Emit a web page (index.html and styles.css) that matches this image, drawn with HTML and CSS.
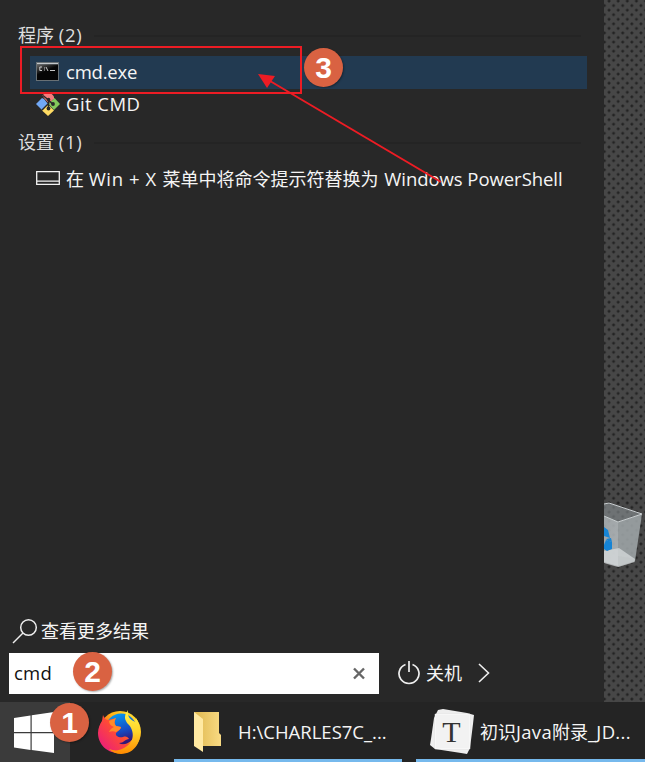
FILE: index.html
```html
<!DOCTYPE html>
<html lang="zh-CN">
<head>
<meta charset="utf-8">
<title>cmd</title>
<link rel="stylesheet" href="styles.css">
</head>
<body>
<div class="screen">
  <main class="desktop">
    <section class="menu">
      <div class="results">
        <h2 class="group"><span class="group-name">程序 <span class="latin count">(2)</span></span></h2>
        <div class="row selected">
          <svg class="icon" width="24" height="24" viewBox="0 0 24 24">
            <defs><linearGradient id="con" x2=".6" y2="1"><stop stop-color="#666"/><stop offset=".5" stop-color="#050505"/></linearGradient></defs>
            <path fill="#687075" d="M0 2h23v19H0z"/><path fill="#c3c7ca" d="M1 3h21v1H1z"/><path fill="url(#con)" d="M1 4.500h21V20H1z"/>
            <path fill="none" stroke="#ddd" stroke-width=".9" d="M6 7H3.800v3.500H6M8.500 7.500v1m0 1v1M10 7l2 4m2-.5h5"/>
          </svg>
          <span class="latin exe">cmd.exe</span>
        </div>
        <div class="row git-row">
          <svg class="icon" width="24" height="24" viewBox="0 0 24 24">
            <path fill="#f47c7c" d="M6.500 3.500 10 0h4l4 4.500v2l-4 4h-2L8 6z"/><path fill="#71a8f5" d="m6 6 2 1 4 5-6 6-6-6z"/>
            <path fill="#83c85b" d="m18.500 6 5.500 6-6 6-5.500-6z"/><path fill="#ffdb63" d="m12 12.500 6 6L12 24l-6-5.500z"/>
            <path stroke="#282828" stroke-width="1.400" fill="none" d="m7 3.500 5.500 4.500v8.500M12.500 8l4.500 4.500M6 18l6-6"/>
            <circle cx="12.500" cy="7.500" r="1.800" fill="#282828"/><circle cx="12.500" cy="16.500" r="1.900" fill="#282828"/><circle cx="17" cy="12" r="1.900" fill="#282828"/>
          </svg>
          <span class="latin git">Git CMD</span>
        </div>
        <h2 class="group settings"><span class="group-name">设置 <span class="latin count">(1)</span></span></h2>
        <div class="row setting-row">
          <svg class="icon" width="24" height="24" viewBox="0 0 24 24"><path fill="none" stroke="#f2f2f2" stroke-width="1.300" d="M.7 4.700h22.600v12.600H.7zM1 14.200h22"/></svg>
          <span>在 <span class="latin win">Win + X</span> 菜单中将命令提示符替换为 <span class="latin ps">Windows PowerShell</span></span>
        </div>
      </div>
      <div class="more">
        <svg width="28" height="28" viewBox="0 0 28 28" fill="none" stroke="#eee" stroke-width="1.500"><circle cx="16.500" cy="10.500" r="7.800"/><path d="M11 16 1 26"/></svg>
        <span>查看更多结果</span>
      </div>
      <div class="bottom">
        <div class="search"><span class="latin query">cmd</span>
          <svg width="14" height="14" viewBox="0 0 14 14"><path stroke="#666" stroke-width="2.400" d="m2 2.500 10 10m0-10-10 10"/></svg>
        </div>
        <div class="power">
          <svg width="22" height="26" viewBox="0 0 22 26" fill="none" stroke="#eee" stroke-width="1.700"><path d="M7.500 4.500a10 9.800 0 1 0 7 0M11 1v11"/></svg>
          <span>关机</span>
          <svg class="chevron" width="12" height="20" viewBox="0 0 12 20" fill="none" stroke="#eee" stroke-width="1.600"><path d="m1 1 9.500 9L1 19"/></svg>
        </div>
      </div>
    </section>
    <aside class="wallpaper">
      <svg class="bin" width="41" height="66" viewBox="0 0 41 66">
        <defs><linearGradient id="glass" x2="1" y2="1"><stop stop-color="#b4babd" stop-opacity=".8"/><stop offset="1" stop-color="#b4babd" stop-opacity=".9"/></linearGradient></defs>
        <path fill="#899093" fill-opacity=".6" d="M0 2 5 1l33 11-24 8L0 14z"/>
        <path fill="url(#glass)" d="m0 14 14 6v44L0 60z"/><path fill="#a2a9ac" fill-opacity=".85" d="m14 20 24-8-7 47-17 5z"/>
        <path fill="#d8dcdd" fill-opacity=".75" d="m0 49 15-3 16 11-1 3-16 5-14-4z"/><path fill="#bfc3c5" d="m14 54 17 3v3l-17 5z" opacity=".5"/>
        <path fill="none" stroke="#c8cdcf" d="m0 2 5-1 33 11-24 8L0 14"/>
        <path fill="#1684d5" d="m0 25 4 3 2 8-6-2zM0 43l2-5 6 2v7l-5 2-3-2z"/><path fill="#1684d5" d="m2 37 5-1 1 4-4-1z"/>
      </svg>
    </aside>
  </main>
  <footer class="taskbar">
    <div class="start"><svg width="40" height="42" viewBox="0 0 40 42" fill="#fff"><path d="m0 6 16.500-2.500V20H0zM17.700 3.300 40 0v20H17.700zM0 21.300h16.500V38L0 35.500zm17.700 0H40V41l-22.300-3z"/></svg></div>
    <div class="firefox">
      <svg width="46" height="46" viewBox="0 0 46 46">
        <defs>
          <linearGradient id="fire" x1="1" y1=".1" x2=".2" y2="1"><stop stop-color="#ffe83b"/><stop offset=".4" stop-color="#ffae12"/><stop offset=".68" stop-color="#ff4a2b"/><stop offset="1" stop-color="#f01583"/></linearGradient>
          <linearGradient id="globe" x2=".3" y2="1"><stop stop-color="#00a6f8"/><stop offset=".65" stop-color="#164dc5"/><stop offset="1" stop-color="#321777"/></linearGradient>
          <linearGradient id="tail" x2="0" y2="1"><stop stop-color="#fff44b"/><stop offset=".5" stop-color="#ffd42a"/><stop offset="1" stop-color="#ff8a00"/></linearGradient>
          <linearGradient id="head" x1="1" y1="0" x2="0" y2=".9"><stop stop-color="#ff8a1e"/><stop offset=".5" stop-color="#ff4b35"/><stop offset="1" stop-color="#e81785"/></linearGradient>
        </defs>
        <circle cx="23" cy="23" r="21" fill="url(#fire)"/>
        <circle cx="24" cy="20" r="15.500" fill="url(#globe)"/>
        <path fill="url(#head)" d="M6 6c1 3 3 5 5 5 3-1 6-1 8-2-2 3-2 6 0 8l5 1c0 2-3 4-5 6-1 3 3 5 7 4 3-1 5 0 6 2-4 0-5 4-10 4 5 3 12 2 17-5-1 9-9 16-18 15C10 44 1 35 1 24c0-5 2-9 4-12z"/>
        <path fill="#ff8a29" d="M12 12c2-1 5-2 7-3-2 3-2 6 0 8l5 1c0 2-3 4-5 5-2-1-5-1-7 0 1-2 2-4 5-5-3-1-5-3-5-6z"/>
        <path fill="url(#tail)" d="M31 1c-3 4-4 8-2 11 1 3 4 4 5 7 4 8 1 16-7 20-5 3-10 3-15 1 8 8 22 6 28-4 5-9 4-20-1-27l-1 4C33 10 30 8 31 1z"/>
      </svg>
    </div>
    <div class="task folder">
      <svg width="28" height="42" viewBox="0 0 28 42"><defs><linearGradient id="fold"><stop stop-color="#dfb84f"/><stop offset="1" stop-color="#f8da83"/></linearGradient></defs><path fill="url(#fold)" d="M0 1h25v21l2 2v11H8z"/><path fill="#ffe9a2" d="m0 1 9 7v33l-9-6z"/></svg>
      <span class="latin path">H:\CHARLES7C_...</span>
    </div>
    <div class="task typora">
      <svg width="45" height="46" viewBox="0 0 45 46"><path fill="#eee" d="m8 1 5-1 24 4 7 2-1 9-3 24-3 6-6-1-26-4-5-4 1-6L4 9z"/><path fill="#fff" stroke="#ddd" stroke-width=".5" d="M5 5h35v35H5z"/><path fill="#f2f2f2" d="M6 6h33v33H6z"/><text class="letter" x="21.500" y="33" text-anchor="middle">T</text></svg>
      <span class="doc">初识<span class="latin java">Java</span>附录<span class="latin jd">_JD...</span></span>
    </div>
  </footer>
  <div class="frame"></div>
  <svg class="arrow" width="190" height="120" viewBox="0 0 190 120"><path stroke="#ed1c24" stroke-width="2" d="m15 9 171 101"/><path fill="#ed1c24" d="m3 2 17 2-8 12z"/></svg>
  <b class="badge one">1</b><b class="badge two">2</b><b class="badge three">3</b>
</div>
</body>
</html>
```
FILE: styles.css
```css
* { box-sizing: border-box; }
body { margin: 0; background: #282828; }
.screen { position: relative; width: 645px; height: 762px; overflow: hidden; color: #f5f5f5; font: 18px/24px "Open Sans", "Noto Sans CJK SC", sans-serif; }
.desktop { display: flex; height: 702px; }
.menu { display: flex; flex-direction: column; width: 604px; background: #282828; }
.results { flex: 1; padding: 23px 17px 0 18px; }
.group { display: flex; align-items: center; gap: 11px; margin: 0; height: 24px; font-size: 18px; font-weight: 400; color: #dedede; }
.group::after { content: ""; flex: 1; height: 2px; margin: 2px 6px 0 0; background: #242424; }
.row { display: flex; align-items: center; gap: 6px; height: 33px; margin-left: 12px; padding: 0 0 1px 6px; white-space: nowrap; }
.row.selected { margin-top: 9px; background: #223a51; }
.git-row { height: 31px; }
.icon { flex: none; }
.settings { margin-top: 10px; }
.setting-row { margin-top: 9px; }
.latin { font-size: 18.500px; }
.count { letter-spacing: .8px; }
.exe { letter-spacing: -.2px; }
.git { letter-spacing: .45px; }
.win { letter-spacing: .6px; margin-right: 1px; }
.ps { letter-spacing: -.05px; margin-left: 1px; }
.path { letter-spacing: 0; }
.java, .jd { letter-spacing: .3px; }
.more { display: flex; align-items: center; gap: 1px; padding-left: 12px; height: 30px; margin-bottom: 7px; }
.bottom { display: flex; height: 41px; margin: 0 0 8px 9px; }
.search { display: flex; align-items: center; justify-content: space-between; width: 370px; padding: 0 13px 1px 5px; background: #fff; color: #111; }
.query { letter-spacing: .2px; }
.power { display: flex; align-items: center; gap: 6px; padding: 0 0 1px 19px; }
.chevron { margin-left: 10px; }
.wallpaper { flex: 1; padding-top: 502px; background-color: #474747; background-image: radial-gradient(circle, #232323 0 1px, transparent 1.800px), radial-gradient(circle, #232323 0 1px, transparent 1.800px); background-size: 9.130px 9.130px; background-position: .5px -3.500px, 5px 1px; }
.bin { display: block; }
.taskbar { display: flex; height: 60px; background: #242424; }
.start { width: 70px; padding: 10px 14px; background: #3b3b3b; }
.firefox { width: 104px; padding: 7px 0 0 27px; }
.task { display: flex; align-items: center; border-bottom: 3px solid #76b9ed; white-space: nowrap; }
.folder { width: 228px; padding-left: 20px; gap: 16px; padding-top: 3px; }
.typora { width: 229px; margin-left: 14px; padding: 3px 0 0 14px; gap: 5px; }
.letter { font: 30px "Liberation Serif", serif; fill: #333; }
.frame { position: absolute; left: 20px; top: 46px; width: 282px; height: 48px; border: 2px solid #ed1c24; }
.arrow { position: absolute; left: 255px; top: 72px; }
.badge { position: absolute; width: 39px; height: 39px; border-radius: 50%; background: #d96242; color: #fff; font: bold 30px/39px "Liberation Sans", sans-serif; text-align: center; box-shadow: 1px 1px 2px #0005; }
.one { left: 50px; top: 703px; }
.two { left: 73px; top: 652px; }
.three { left: 304px; top: 48px; }
```
